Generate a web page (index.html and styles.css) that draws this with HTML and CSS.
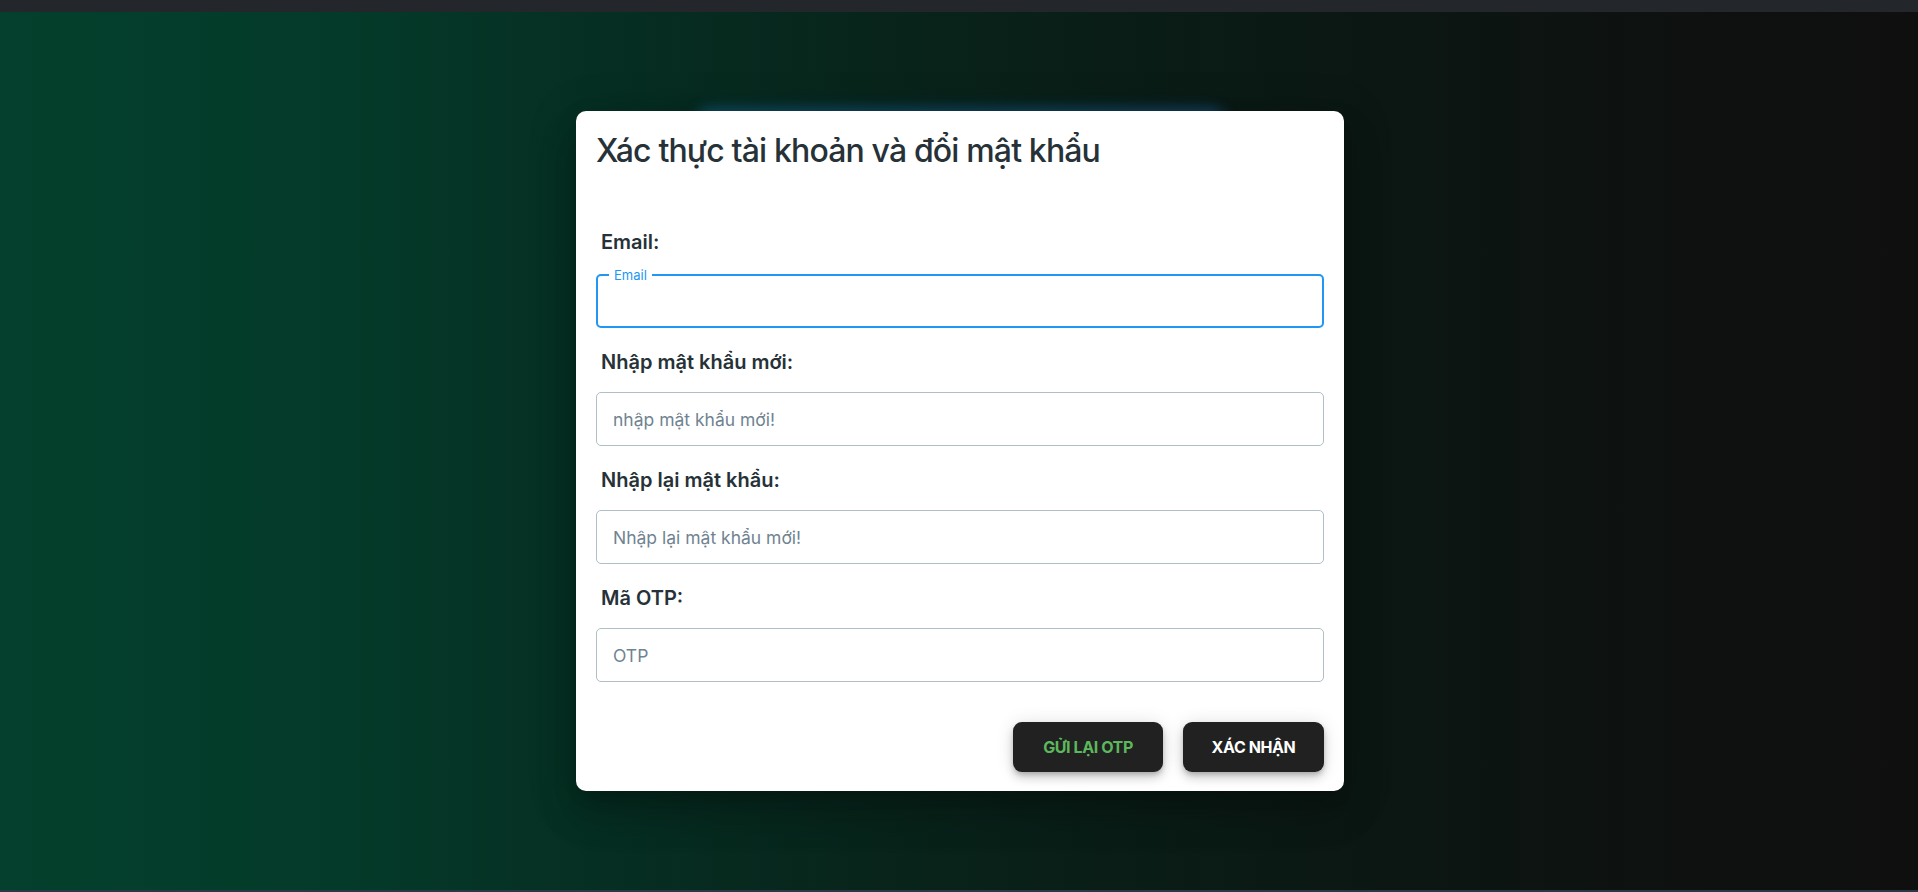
FILE: index.html
```html
<!DOCTYPE html>
<html lang="vi">
<head>
<meta charset="utf-8">
<title>Xác thực tài khoản</title>
<link rel="stylesheet" href="styles.css">
</head>
<body>
<div class="topbar"></div>
<main class="stage">
  <div class="modal">
    <div class="glow"></div>
    <section class="dialog">
      <h2 class="dialog-title">Xác thực tài khoản và đổi mật khẩu</h2>
      <form class="form">
        <div class="field">
          <label class="field-label label-email">Email:</label>
          <div class="outlined focused">
            <span class="notch-label">Email</span>
            <input class="text-input" type="email">
          </div>
        </div>
        <div class="field">
          <label class="field-label">Nhập mật khẩu mới:</label>
          <div class="outlined">
            <input class="text-input" type="password" placeholder="nhập mật khẩu mới!">
          </div>
        </div>
        <div class="field">
          <label class="field-label">Nhập lại mật khẩu:</label>
          <div class="outlined">
            <input class="text-input" type="password" placeholder="Nhập lại mật khẩu mới!">
          </div>
        </div>
        <div class="field">
          <label class="field-label">Mã OTP:</label>
          <div class="outlined">
            <input class="text-input" type="text" placeholder="OTP">
          </div>
        </div>
      </form>
      <div class="actions">
        <button class="btn btn-resend" type="button">Gửi lại OTP</button>
        <button class="btn btn-confirm" type="button">Xác nhận</button>
      </div>
    </section>
  </div>
</main>
<div class="bottombar"></div>
</body>
</html>
```

FILE: styles.css
```css
* { box-sizing: border-box; }

html, body {
  margin: 0;
  padding: 0;
  height: 100%;
}

body {
  display: flex;
  flex-direction: column;
  height: 892px;
  overflow: hidden;
  font-family: Inter, "Noto Sans", "Liberation Sans", sans-serif;
  background: #0f0f0f;
}

.topbar {
  height: 12px;
  flex: none;
  background: #23272c;
}

.bottombar {
  height: 2px;
  flex: none;
  background: #2b3845;
}

.stage {
  flex: 1;
  display: flex;
  justify-content: center;
  align-items: flex-start;
  padding-top: 99px;
  padding-left: 2px;
  background: linear-gradient(90deg, #04402d 0%, #043a29 18%, #062e22 32%, #08241b 46%, #0a1c16 60%, #0c1512 76%, #0e1110 88%, #0f0f0f 100%);
}

.modal {
  position: relative;
  width: 768px;
}

.glow {
  position: absolute;
  top: 0;
  left: 124px;
  right: 122px;
  height: 500px;
  border-radius: 10px;
  background: #163a5c;
  box-shadow: 0 0 14px 3px rgba(30, 120, 200, 0.45);
}

.dialog {
  position: relative;
  background: #ffffff;
  border-radius: 10px;
  padding: 20px 20px 19px;
  box-shadow: 0 11px 15px -7px rgba(0,0,0,0.2), 0 24px 38px 3px rgba(0,0,0,0.14), 0 9px 46px 8px rgba(0,0,0,0.12);
}

.dialog-title {
  margin: 0;
  font-size: 32px;
  line-height: 40px;
  font-weight: 500;
  color: #263238;
  letter-spacing: -0.85px;
}

.form {
  margin-top: 57px;
  display: flex;
  flex-direction: column;
  gap: 20px;
}

.field {
  display: flex;
  flex-direction: column;
}

.field-label {
  display: block;
  padding-left: 5px;
  margin-bottom: 16px;
  font-size: 20px;
  line-height: 28px;
  font-weight: 600;
  color: #263238;
}

.label-email {
  margin-bottom: 18px;
}

.outlined {
  position: relative;
  height: 54px;
  border: 1px solid #b0bec5;
  border-radius: 5px;
  display: flex;
  align-items: center;
}

.outlined.focused {
  border: 2px solid #2196f3;
}

.notch-label {
  position: absolute;
  top: -9px;
  left: 11px;
  padding: 0 5px;
  background: #ffffff;
  color: #2196f3;
  font-size: 13px;
  line-height: 16px;
}

.text-input {
  width: 100%;
  height: 100%;
  border: 0;
  outline: none;
  background: transparent;
  padding: 0 16px;
  font-family: inherit;
  font-size: 17.5px;
  color: #263238;
}

.focused .text-input {
  padding: 0 15px;
}

.text-input::placeholder {
  color: #6f8391;
  opacity: 1;
}

.actions {
  margin-top: 40px;
  display: flex;
  justify-content: flex-end;
  gap: 20px;
}

.btn {
  height: 50px;
  padding: 0;
  border: 0;
  border-radius: 9px;
  background: #212121;
  font-family: inherit;
  font-size: 16px;
  font-weight: 700;
  letter-spacing: -0.4px;
  text-transform: uppercase;
  cursor: pointer;
  box-shadow: 0 3px 5px -1px rgba(0,0,0,0.2), 0 6px 10px 0 rgba(0,0,0,0.14), 0 1px 18px 0 rgba(0,0,0,0.12);
}

.btn-resend {
  width: 150px;
  color: #5cb85c;
}

.btn-confirm {
  width: 141px;
  color: #ffffff;
}
```
